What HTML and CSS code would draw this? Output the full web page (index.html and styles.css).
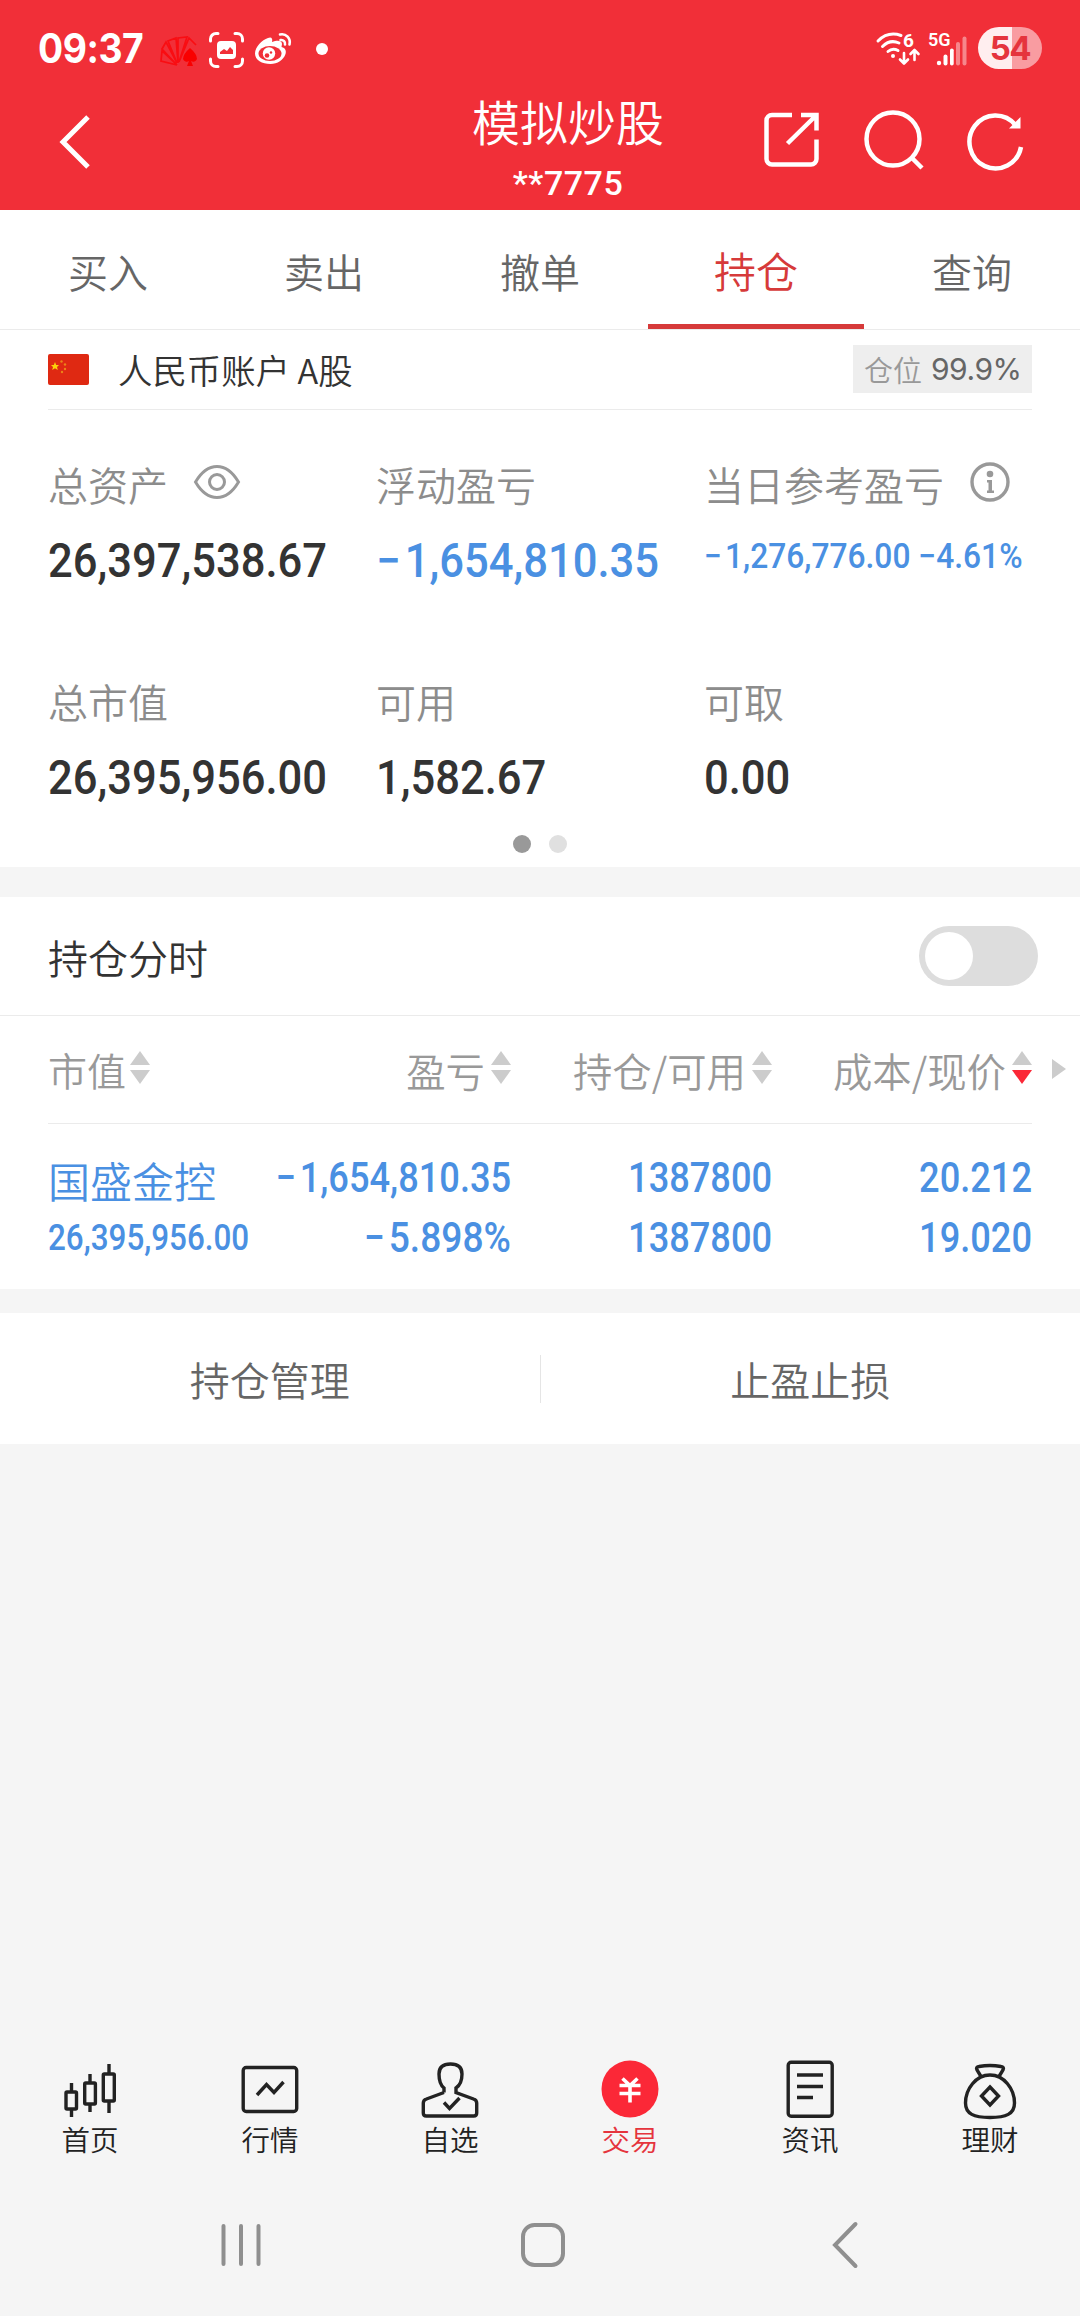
FILE: index.html
```html
<!DOCTYPE html>
<html lang="zh-CN">
<head>
<meta charset="utf-8">
<title>模拟炒股</title>
<link rel="stylesheet" href="styles.css">
</head>
<body>
<header class="header">
  <div class="status">
    <span class="clock">09:37</span>
    <svg class="ic-fan" width="38" height="32" viewBox="0 0 38 32"><g fill="none" stroke="#f90d12" stroke-width="1.700"><path d="M17 30 1 26 2 16 17 30 2 14 6 7 17 28 8 6 16 3 18 28 18 3 27 2 19 27 29 3 36 10"/></g><path d="M30 13q7 6 7 11a4 4 0 0 1-6 2l2 5h-6l2-5a4 4 0 0 1-6-2q0-5 7-11z" fill="#f90000"/></svg>
    <svg class="ic-shot" width="35" height="36" viewBox="0 0 35 36"><path d="M1.500 9V7A5.500 5.500 0 0 1 7 1.500H9M26 1.500h2A5.500 5.500 0 0 1 33.500 7V9M33.500 27v2a5.500 5.500 0 0 1-5.500 5.500H26M9 34.500H7A5.500 5.500 0 0 1 1.500 29V27" fill="none" stroke="#fff" stroke-width="3" stroke-linecap="round"/><rect x="8" y="9" width="19" height="18" rx="4" fill="#fff"/><path d="M11 22v-2l4-3 3 2 3-4 3 3v4z" fill="#f12f38"/></svg>
    <svg class="ic-weibo" width="37" height="32" viewBox="0 0 37 32"><path d="M13 5c3-1.500 5 0 4 4 5-2 10-2 10 2l-.5 3c4 1 5 4 4 7-2 6-8 10-15 10C7 31 0 27 0 20.500 0 14 7 7 13 5z" fill="#fff"/><ellipse cx="15" cy="20.500" rx="11.500" ry="7.500" fill="#f12f38"/><circle cx="14" cy="20.500" r="6.200" fill="#fff"/><circle cx="12" cy="22.500" r="2.300" fill="#f12f38"/><circle cx="16" cy="19.500" r="1.200" fill="#f12f38"/><path d="M25 1.500c6-1.500 11 4 9.500 10M25.500 7c3-.5 5 2 4.500 4.500" fill="none" stroke="#fff" stroke-width="2.600" stroke-linecap="round"/></svg>
    <span class="status-dot"></span>
    <span class="status-space"></span>
    <svg class="ic-wifi" width="45" height="34" viewBox="0 0 45 34"><g fill="none" stroke="#fff" stroke-width="3" stroke-linecap="round" stroke-linejoin="round"><path d="M2 9Q12-1 25 3.500M6.500 14.500Q14 7 23 11M12 19.500Q16.500 15.500 22 18.500"/><path d="M28 21v10M24 27.500l4 4 4-4M38.500 28V19M34.500 22l4-4 4 4" stroke-width="2.600"/></g><circle cx="17" cy="24" r="2" fill="#fff"/><text class="wifi-gen" x="27" y="15">6</text></svg>
    <svg class="ic-sig" width="39" height="34" viewBox="0 0 39 34"><text class="net-gen" x="0" y="13.500">5G</text><g fill="#fff"><circle cx="11" cy="31" r="2.200"/><rect x="15.500" y="22.500" width="4" height="11" rx="2"/><rect x="22" y="16.500" width="3.700" height="17" rx="1.800"/><g opacity=".42"><rect x="28" y="10" width="4" height="23.500" rx="2"/><rect x="34.500" y="4.500" width="4" height="29" rx="2"/></g></g></svg>
    <span class="battery">54</span>
  </div>
  <div class="titlebar">
    <svg class="ic-back" width="30" height="54" viewBox="0 0 30 54"><path d="M28 2 3 27 28 52" fill="none" stroke="#fff" stroke-width="5"/></svg>
    <div class="title"><h1>模拟炒股</h1><p class="acct-no">**7775</p></div>
    <div class="actions">
      <svg width="56" height="56" viewBox="0 0 56 56"><path d="M28 3H8A5.500 5.500 0 0 0 2.500 8.500V47A5.500 5.500 0 0 0 8 52.500H47A5.500 5.500 0 0 0 52.500 47V27.500M37 3H52.500V18.500M51 4.500 23.500 31.500" fill="none" stroke="#fff" stroke-width="4.500"/></svg>
      <svg width="60" height="60" viewBox="0 0 60 60"><circle cx="29" cy="29" r="26.500" fill="none" stroke="#fff" stroke-width="4.500"/><path d="M47.500 47.500 58 58" stroke="#fff" stroke-width="4.500"/></svg>
      <svg width="57" height="60" viewBox="0 0 57 60"><path d="M48.500 15A26 26.500 0 1 0 54 37" fill="none" stroke="#fff" stroke-width="4.500"/><path d="M53.500 7V18.500H42z" fill="#fff"/></svg>
    </div>
  </div>
</header>
<nav class="tabs">
  <a class="tab">买入</a><a class="tab">卖出</a><a class="tab">撤单</a><a class="tab active">持仓</a><a class="tab">查询</a>
</nav>
<section class="card account">
  <div class="acct-row">
    <svg width="41" height="31" viewBox="0 0 41 31"><rect width="41" height="31" rx="2" fill="#df2912"/><path d="M7 8l1.200 3H11l-2 2 .8 3L7 14.300 4.200 16l.8-3-2-2h2.800z" fill="#fbd00a"/><g fill="#ec8418"><circle cx="13.500" cy="7.500" r="1.200"/><circle cx="17" cy="10.500" r="1.200"/><circle cx="17" cy="15" r="1.200"/><circle cx="14" cy="18" r="1.200"/></g></svg>
    <span class="acct-name">人民币账户 A股</span>
    <span class="badge">仓位 <b>99.9%</b></span>
  </div>
  <div class="stats">
    <div class="stat">
      <div class="label">总资产<svg class="ic-eye" width="46" height="34" viewBox="0 0 46 34"><g fill="none" stroke="#999" stroke-width="3"><path d="M1.500 17C8 6 15 1.500 23 1.500S38 6 44.500 17C38 28 31 32.500 23 32.500S8 28 1.500 17z"/><circle cx="23" cy="17" r="7.500"/></g></svg></div>
      <div class="value num">26,397,538.67</div>
    </div>
    <div class="stat">
      <div class="label">浮动盈亏</div>
      <div class="value num blue"><span class="minus">−</span>1,654,810.35</div>
    </div>
    <div class="stat">
      <div class="label">当日参考盈亏<svg class="ic-info" width="40" height="40" viewBox="0 0 40 40"><circle cx="20" cy="20" r="18" fill="none" stroke="#999" stroke-width="3.400"/><circle cx="20" cy="12" r="3.300" fill="#999"/><path d="M17 18h5v10.500h2V31h-7v-2.500h1.500V20.500H17z" fill="#999"/></svg></div>
      <div class="value num blue small"><span class="minus">−</span>1,276,776.00 −4.61%</div>
    </div>
    <div class="stat"><div class="label">总市值</div><div class="value num">26,395,956.00</div></div>
    <div class="stat"><div class="label">可用</div><div class="value num">1,582.67</div></div>
    <div class="stat"><div class="label">可取</div><div class="value num">0.00</div></div>
  </div>
  <div class="pager"><i class="dot on"></i><i class="dot"></i></div>
</section>
<section class="card holdings">
  <div class="switch-row"><span>持仓分时</span><span class="switch"><i class="knob"></i></span></div>
  <div class="thead">
    <span class="th first">市值<i class="sort"></i></span>
    <span class="th">盈亏<i class="sort"></i></span>
    <span class="th">持仓/可用<i class="sort"></i></span>
    <span class="th">成本/现价<i class="sort desc"></i></span>
    <i class="more"></i>
  </div>
  <div class="trow">
    <div class="td first"><span class="name">国盛金控</span><span class="num mv">26,395,956.00</span></div>
    <div class="td"><span class="num"><span class="minus">−</span>1,654,810.35</span><span class="num pct"><span class="minus">−</span>5.898%</span></div>
    <div class="td"><span class="num">1387800</span><span class="num">1387800</span></div>
    <div class="td"><span class="num">20.212</span><span class="num">19.020</span></div>
  </div>
</section>
<section class="card buttons"><a>持仓管理</a><i class="vline"></i><a>止盈止损</a></section>
<footer class="footer">
  <nav class="bottom">
    <a class="item"><svg width="60" height="64" viewBox="0 0 60 64"><g fill="none" stroke="#222" stroke-width="3.400"><path d="M11.500 23v8M11.500 50v7M30 14v8M30 45v7M49 4v9M49 42v11"/><rect x="6" y="32" width="10.500" height="17" rx="1"/><rect x="24.700" y="23" width="10.700" height="21" rx="1"/><rect x="43.300" y="14" width="11" height="27" rx="1"/></g></svg>首页</a>
    <a class="item"><svg width="60" height="64" viewBox="0 0 60 64"><g fill="none" stroke="#222" stroke-width="3.400"><rect x="3.200" y="7.500" width="53.500" height="44" rx="3"/><path d="M17 35l9.500-10.500L34 32.500 43.500 22"/></g></svg>行情</a>
    <a class="item"><svg width="60" height="64" viewBox="0 0 60 64"><g fill="none" stroke="#222" stroke-width="3.400"><path d="M24 32.500L6.500 39Q3.300 40 3.300 43V53q0 3 3 3H53.700q3 0 3-3V43q0-3-3.200-4L36 32.500V28q6-4 6-14Q42 4 30.500 4T19 14q0 10 5 14v4.500"/><path d="M24 42.500l5.500 6 10-10.500"/></g></svg>自选</a>
    <a class="item on"><svg width="60" height="64" viewBox="0 0 60 64"><circle cx="30" cy="29" r="28.500" fill="#fb2837"/><path d="M22.500 18.500l7.500 7 7.500-7M19.500 25.500H40.500M19.500 33.500H40.500M30 25V42.500" fill="none" stroke="#fff" stroke-width="3.600"/></svg>交易</a>
    <a class="item"><svg width="60" height="64" viewBox="0 0 60 64"><g fill="none" stroke="#222" stroke-width="3.400"><rect x="8.200" y="2.200" width="44" height="54" rx="3"/><path d="M17 15H43M17 26.500H43M17 37.500H33"/></g></svg>资讯</a>
    <a class="item"><svg width="60" height="64" viewBox="0 0 60 64"><g fill="none" stroke="#222" stroke-width="3.400"><path d="M21 16.500 17 10q-1.500-3 2-3.500 11-2 22 0 3.500.5 2 3.500L39 16.500"/><path d="M30 15C16 15 5.500 29 5.500 43 5.500 54 14 57.500 30 57.500S54.500 54 54.500 43C54.500 29 44 15 30 15z"/><path d="M30 27l8.500 9L30 45l-8.500-9z"/></g></svg>理财</a>
  </nav>
  <div class="sysnav">
    <svg width="42" height="46" viewBox="0 0 42 46"><path d="M3.500 4V42M21 4V42M38.500 4V42" stroke="#8f8f8f" stroke-width="4" stroke-linecap="round"/></svg>
    <svg width="46" height="46" viewBox="0 0 46 46"><rect x="3" y="3" width="40" height="40" rx="11.500" fill="none" stroke="#8f8f8f" stroke-width="4"/></svg>
    <svg width="28" height="48" viewBox="0 0 28 48"><path d="M24.500 3 4 24 24.500 45" fill="none" stroke="#8f8f8f" stroke-width="4" stroke-linecap="round"/></svg>
  </div>
</footer>
</body>
</html>
```
FILE: styles.css
```css
* { box-sizing: border-box; margin: 0; padding: 0; }
body {
  width: 1080px; height: 2316px;
  display: flex; flex-direction: column;
  background: #f5f5f5; color: #333;
  font-family: "Noto Sans CJK SC", sans-serif; font-weight: 350;
  font-size: 40px; line-height: 1;
  overflow: hidden;
}
svg { display: block; flex: none; overflow: visible; }
i { font-style: normal; }

.header { height: 210px; background: #f12f38; color: #fff; flex: none; }
.status { height: 98px; display: flex; align-items: center; padding: 0 38px 0 38px; }
.clock { width: 107px; font: 700 41px/1 Inter, sans-serif; letter-spacing: -.5px; white-space: nowrap; transform: scaleX(.91); transform-origin: left; margin-top: -2px; }
.ic-fan { margin-left: 15px; margin-top: 3px; }
.ic-shot { margin-left: 11px; margin-top: 2px; }
.ic-weibo { margin-left: 11px; }
.status-dot { width: 12px; height: 12px; border-radius: 50%; background: #fff; margin-left: 24px; }
.status-space { flex: 1; }
.ic-wifi { margin-right: 1px; }
.wifi-gen { font: 700 19px Roboto, sans-serif; fill: #fff; }
.net-gen { font: 600 18px Roboto, sans-serif; fill: #fff; }
.ic-sig { margin-left: 6px; }
.battery {
  width: 64px; height: 42px; margin-left: 11px; margin-top: -2px; border-radius: 21px;
  background: linear-gradient(90deg, #ffeeef 53%, #f99ca1 53%);
  color: #e5343d; font: 700 33px/42px Inter, sans-serif; letter-spacing: -1.500px; text-align: center;
}
.titlebar { height: 112px; display: grid; grid-template-columns: 312px 1fr 288px; align-items: start; padding: 0 28px 0 60px; }
.ic-back { margin-top: 17px; }
.title { text-align: center; display: flex; flex-direction: column; align-items: center; }
h1 { font-size: 48px; font-weight: 350; line-height: 50px; margin-top: -3px; }
.acct-no { font: 500 34px/34px Roboto, sans-serif; margin-top: 21px; letter-spacing: .5px; }
.actions { display: flex; justify-content: space-between; align-items: center; padding: 12px 28px 0 0; }

.tabs { height: 120px; flex: none; background: #fff; display: grid; grid-template-columns: repeat(5, 1fr); border-bottom: 1px solid #ebebeb; }
.tab { display: flex; align-items: center; justify-content: center; color: #666; padding-top: 2px; }
.tab.active { color: #d63a3a; font-size: 42px; border-bottom: 5px solid #d63a3a; padding-top: 6px; }

.card { background: #fff; flex: none; }
.account { height: 537px; }
.acct-row { height: 80px; margin: 0 48px; border-bottom: 1px solid #ebebeb; display: flex; align-items: center; }
.acct-name { font-size: 34.400px; margin-left: 29px; flex: 1; }
.badge { width: 179px; height: 48px; background: #eee; display: flex; align-items: center; padding-left: 11px; gap: 9px; font-size: 29px; color: #999; white-space: nowrap; margin-top: -1px; }
.badge b { font: 400 30px/1 Inter, sans-serif; color: #666; letter-spacing: -.5px; }
.stats { height: 417px; margin: 0 48px; display: grid; grid-template-columns: 328px 328px 328px; grid-template-rows: 217px 200px; padding-top: 54px; }
.label { height: 40px; display: flex; align-items: center; color: #8c8c8c; white-space: nowrap; }
.ic-eye { margin-left: 26px; margin-top: -4px; }
.ic-info { margin-left: 26px; margin-top: -4px; }
.num { font-family: Roboto, sans-serif; font-weight: 500; white-space: nowrap; transform: scaleX(.907); transform-origin: left; }
.minus { margin-right: .1em; }
.value { font-size: 48px; line-height: 48px; margin-top: 33px; }
.value.small { font-size: 35px; line-height: 40px; }
.blue { color: #4a90e2; }
.pager { display: flex; justify-content: center; gap: 18px; margin-top: 8px; }
.dot { width: 18px; height: 18px; border-radius: 50%; background: #e0e0e0; }
.dot.on { background: #999; }

.holdings { margin-top: 30px; height: 392px; }
.switch-row { height: 119px; border-bottom: 1px solid #ebebeb; display: flex; align-items: center; justify-content: space-between; padding: 0 42px 0 48px; }
.switch-row > span:first-child { padding-top: 2px; }
.switch { width: 119px; height: 60px; border-radius: 30px; background: #ddd; padding: 6px; }
.knob { display: block; width: 48px; height: 48px; border-radius: 50%; background: #fff; }
.thead, .trow { display: grid; grid-template-columns: 210px 253px 261px 260px; }
.thead { height: 108px; margin: 0 48px; border-bottom: 1px solid #ebebeb; align-items: center; position: relative; color: #999; font-size: 39.400px; }
.th { display: flex; align-items: center; justify-content: flex-end; gap: 6px; white-space: nowrap; }
.th.first { justify-content: flex-start; font-size: 39px; gap: 4px; }
.sort { display: flex; flex-direction: column; gap: 5px; margin-top: -4px; }
.sort::before, .sort::after { content: ""; border: 10px solid transparent; }
.sort::before { border-top: 0; border-bottom: 14px solid #ccc; }
.sort::after { border-bottom: 0; border-top: 14px solid #ccc; }
.sort.desc::after { border-top-color: #fb2837; }
.more { position: absolute; right: -34px; top: 43px; border: 10px solid transparent; border-left: 14px solid #ccc; border-right: 0; }
.trow { margin: 0 48px; padding-top: 24px; color: #4a90e2; }
.td { display: flex; flex-direction: column; align-items: flex-end; }
.td .num { font-size: 42px; line-height: 60px; transform: scaleX(.862); transform-origin: right; }
.td .num.pct { transform: scaleX(.885); }
.td.first { align-items: flex-start; }
.name { font-size: 42px; line-height: 64px; white-space: nowrap; }
.td .num.mv { font-size: 36px; line-height: 52px; transform: scaleX(.872); transform-origin: left; }

.buttons { margin-top: 24px; height: 131px; display: grid; grid-template-columns: 1fr 1px 1fr; align-items: center; text-align: center; color: #666; }
.vline { height: 48px; background: #e5e5e5; }

.footer { margin-top: auto; height: 276px; flex: none; }
.bottom { display: grid; grid-template-columns: repeat(6, 1fr); padding-top: 20px; }
.item { display: flex; flex-direction: column; align-items: center; font-size: 28.500px; line-height: 30px; color: #222; }
.item.on { color: #e5343d; }
.sysnav { display: grid; grid-template-columns: 482px 122px 482px; justify-content: center; justify-items: center; align-items: center; margin-top: 67px; height: 48px; padding-left: 6px; }
```
